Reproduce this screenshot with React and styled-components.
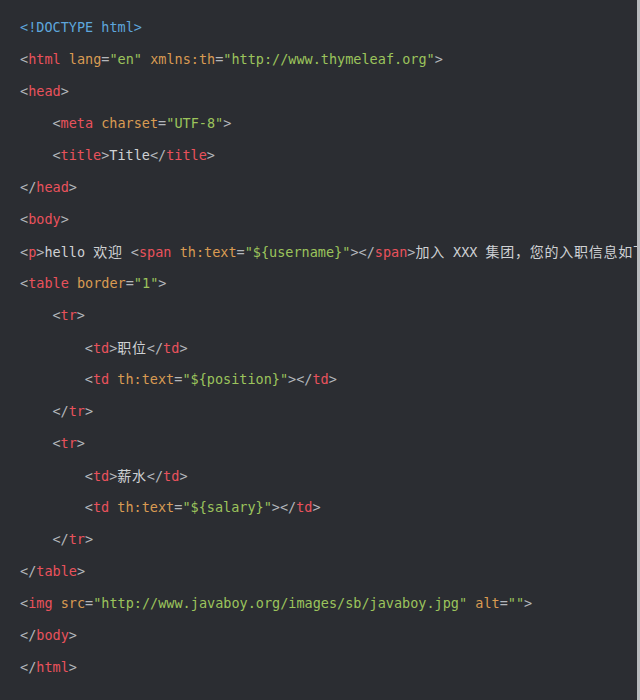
import React from "react";
import styled, { createGlobalStyle } from "styled-components";

const GlobalStyle = createGlobalStyle`
  html, body {
    margin: 0;
    padding: 0;
    background: #2b2d32;
  }
`;

const Frame = styled.div`
  width: 640px;
  height: 700px;
  box-sizing: border-box;
  background: #2b2d32;
  border-right: 3px solid #b9bbbe;
  overflow: hidden;
`;

const Code = styled.div`
  padding: 11px 0 0 20px;
  font-family: "DejaVu Sans Mono", "Liberation Mono", "Noto Sans CJK SC", monospace;
  font-size: 13.5px;
  line-height: 32px;
  color: #c9cbcf;
  white-space: pre;
`;

const Line = styled.div`
  height: 32px;
  padding-left: ${(p) => (p.$indent || 0) * 32.4}px;
`;

const Punc = styled.span`
  color: #b4b7bc;
`;

const Doc = styled.span`
  color: #5ea6dc;
`;

const Tag = styled.span`
  color: #e9525c;
`;

const Attr = styled.span`
  color: #d99b52;
`;

const Str = styled.span`
  color: #9cc45c;
`;

const Text = styled.span`
  color: #cfd1d4;
`;

const Cjk = styled.span`
  font-family: "Noto Sans CJK SC", sans-serif;
  font-size: 14px;
  letter-spacing: 0.75px;
  color: #cfd1d4;
`;

const Open = ({ name, children }) => (
  <>
    <Punc>&lt;</Punc>
    <Tag>{name}</Tag>
    {children}
    <Punc>&gt;</Punc>
  </>
);

const Close = ({ name }) => (
  <>
    <Punc>&lt;/</Punc>
    <Tag>{name}</Tag>
    <Punc>&gt;</Punc>
  </>
);

const A = ({ name, value }) => (
  <>
    {" "}
    <Attr>{name}</Attr>
    <Punc>=</Punc>
    <Str>"{value}"</Str>
  </>
);

export default function App() {
  return (
    <Frame>
      <GlobalStyle />
      <Code>
        <Line>
          <Doc>&lt;!DOCTYPE html&gt;</Doc>
        </Line>
        <Line>
          <Open name="html">
            <A name="lang" value="en" />
            <A name="xmlns:th" value="http://www.thymeleaf.org" />
          </Open>
        </Line>
        <Line>
          <Open name="head" />
        </Line>
        <Line $indent={1}>
          <Open name="meta">
            <A name="charset" value="UTF-8" />
          </Open>
        </Line>
        <Line $indent={1}>
          <Open name="title" />
          <Text>Title</Text>
          <Close name="title" />
        </Line>
        <Line>
          <Close name="head" />
        </Line>
        <Line>
          <Open name="body" />
        </Line>
        <Line>
          <Open name="p" />
          <Text>hello </Text>
          <Cjk>欢迎</Cjk>
          <Text> </Text>
          <Open name="span">
            <A name="th:text" value="${username}" />
          </Open>
          <Close name="span" />
          <Cjk>加入</Cjk>
          <Text> XXX </Text>
          <Cjk>集团，您的入职信息如下</Cjk>
        </Line>
        <Line>
          <Open name="table">
            <A name="border" value="1" />
          </Open>
        </Line>
        <Line $indent={1}>
          <Open name="tr" />
        </Line>
        <Line $indent={2}>
          <Open name="td" />
          <Cjk>职位</Cjk>
          <Close name="td" />
        </Line>
        <Line $indent={2}>
          <Open name="td">
            <A name="th:text" value="${position}" />
          </Open>
          <Close name="td" />
        </Line>
        <Line $indent={1}>
          <Close name="tr" />
        </Line>
        <Line $indent={1}>
          <Open name="tr" />
        </Line>
        <Line $indent={2}>
          <Open name="td" />
          <Cjk>薪水</Cjk>
          <Close name="td" />
        </Line>
        <Line $indent={2}>
          <Open name="td">
            <A name="th:text" value="${salary}" />
          </Open>
          <Close name="td" />
        </Line>
        <Line $indent={1}>
          <Close name="tr" />
        </Line>
        <Line>
          <Close name="table" />
        </Line>
        <Line>
          <Open name="img">
            <A name="src" value="http://www.javaboy.org/images/sb/javaboy.jpg" />
            <A name="alt" value="" />
          </Open>
        </Line>
        <Line>
          <Close name="body" />
        </Line>
        <Line>
          <Close name="html" />
        </Line>
      </Code>
    </Frame>
  );
}
